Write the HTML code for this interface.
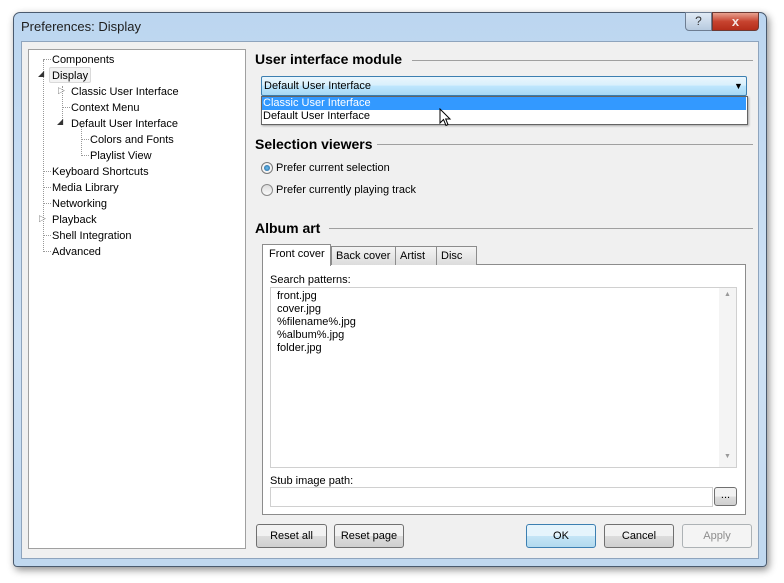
<!DOCTYPE html>
<html><head><style>
*{box-sizing:border-box;margin:0;padding:0}
body{width:784px;height:583px;background:#fff;font-family:"Liberation Sans",sans-serif;font-size:11px;color:#000;position:relative;overflow:hidden}
.a{position:absolute}
.frame{left:13px;top:12px;width:754px;height:555px;border:1px solid #4a5a6e;border-radius:7px 7px 4px 4px;background:linear-gradient(#bcd6f0,#cfe2f5 60%,#c0d8ef);box-shadow:2px 3px 8px rgba(0,0,0,.45)}
.client{left:21px;top:41px;width:738px;height:518px;background:#f0f0f0;border:1px solid #8ea4bd}
.tree{left:28px;top:49px;width:218px;height:500px;background:#fff;border:1px solid #a0a0a0}
.t{position:absolute;font-size:11px;white-space:nowrap}
.tr .t{margin-top:1px}
.h{position:absolute;font-size:14px;font-weight:bold;white-space:nowrap}
.ln{position:absolute;height:1px;background:#a0a0a0}
.btn{position:absolute;height:24px;border:1px solid #707070;border-radius:3px;background:linear-gradient(#f2f2f2 50%,#dddddd 51%,#cfcfcf);text-align:center;line-height:22px;font-size:11px}
.tab{position:absolute;top:246px;height:19px;border:1px solid #8c8c8c;border-bottom:none;background:linear-gradient(#f4f4f4,#dcdcdc);line-height:19px;padding-left:4px;font-size:11px}
.dot{position:absolute;border-left:1px dotted #999}
.doth{position:absolute;border-top:1px dotted #999;width:8px}
</style></head><body>
<div class="a frame"></div>
<div class="t" style="left:21px;top:19px;font-size:13px;color:#1e1e1e">Preferences: Display</div>
<div class="a" style="left:685px;top:12px;width:27px;height:19px;border:1px solid #6d7d92;border-radius:0 0 0 4px;background:linear-gradient(#e0ebf6,#b7cadf);text-align:center;font-size:12px;line-height:17px;color:#333">?</div>
<div class="a" style="left:712px;top:12px;width:47px;height:19px;border:1px solid #6d3a34;border-radius:0 0 4px 0;background:linear-gradient(#e8a18f,#c7432f 50%,#b42d1a);text-align:center;font-size:13px;line-height:17px;color:#f4e4e0;font-weight:bold">x</div>
<div class="a client"></div>
<div class="a tree"></div>
<div class="dot" style="left:43px;top:60px;height:192px"></div>
<div class="dot" style="left:62px;top:86px;height:38px"></div>
<div class="dot" style="left:81px;top:126px;height:30px"></div>
<div class="doth" style="left:43px;top:59px"></div>
<div class="doth" style="left:62px;top:107px"></div>
<div class="doth" style="left:81px;top:139px"></div>
<div class="doth" style="left:81px;top:155px"></div>
<div class="doth" style="left:43px;top:171px"></div>
<div class="doth" style="left:43px;top:187px"></div>
<div class="doth" style="left:43px;top:203px"></div>
<div class="doth" style="left:43px;top:235px"></div>
<div class="doth" style="left:43px;top:251px"></div>
<div class="a" style="left:49px;top:67px;width:42px;height:16px;background:#f3f3f3;border:1px solid #dadada;border-radius:2px"></div>
<div class="t" style="left:38px;top:69px;font-size:8px;color:#333">◢</div>
<div class="t" style="left:58px;top:85px;font-size:9px;color:#888">▷</div>
<div class="t" style="left:57px;top:117px;font-size:8px;color:#333">◢</div>
<div class="t" style="left:39px;top:213px;font-size:9px;color:#888">▷</div>
<div class="tr">
<div class="t" style="left:52px;top:53px">Components</div>
<div class="t" style="left:52px;top:69px">Display</div>
<div class="t" style="left:71px;top:85px">Classic User Interface</div>
<div class="t" style="left:71px;top:101px">Context Menu</div>
<div class="t" style="left:71px;top:117px">Default User Interface</div>
<div class="t" style="left:90px;top:133px">Colors and Fonts</div>
<div class="t" style="left:90px;top:149px">Playlist View</div>
<div class="t" style="left:52px;top:165px">Keyboard Shortcuts</div>
<div class="t" style="left:52px;top:181px">Media Library</div>
<div class="t" style="left:52px;top:197px">Networking</div>
<div class="t" style="left:52px;top:213px">Playback</div>
<div class="t" style="left:52px;top:229px">Shell Integration</div>
<div class="t" style="left:52px;top:245px">Advanced</div>
</div>

<div class="h" style="left:255px;top:51px">User interface module</div>
<div class="ln" style="left:412px;top:60px;width:341px"></div>
<div class="a" style="left:261px;top:76px;width:486px;height:20px;border:1px solid #3c7fb1;border-radius:2px;background:linear-gradient(#eaf6fd,#d9f0fc 45%,#bee6fd 50%,#a7d9f5)"></div>
<div class="t" style="left:264px;top:80px">Default User Interface</div>
<div class="t" style="left:734px;top:81px;font-size:9px">▼</div>
<div class="a" style="left:261px;top:96px;width:487px;height:29px;background:#fff;border:1px solid #646464;box-shadow:1px 1px 2px rgba(0,0,0,.3)"></div>
<div class="a" style="left:262px;top:97px;width:484px;height:13px;background:#3399ff"></div>
<div class="t" style="left:263px;top:97px;color:#fff">Classic User Interface</div>
<div class="t" style="left:263px;top:110px">Default User Interface</div>
<svg class="a" style="left:439px;top:108px" width="14" height="20"><path d="M1 1 L1 15 L4.5 11.5 L7 17.5 L9 16.5 L6.7 11 L11 11 Z" fill="#fff" stroke="#000" stroke-width="1"/></svg>

<div class="h" style="left:255px;top:136px">Selection viewers</div>
<div class="ln" style="left:377px;top:144px;width:376px"></div>
<div class="a" style="left:261px;top:162px;width:12px;height:12px;border:1px solid #7a7a7a;border-radius:50%;background:#f4f4f4"><div class="a" style="left:2px;top:2px;width:6px;height:6px;border-radius:50%;background:radial-gradient(#6cc1f0,#1b5a95)"></div></div>
<div class="t" style="left:276px;top:162px">Prefer current selection</div>
<div class="a" style="left:261px;top:184px;width:12px;height:12px;border:1px solid #8a8a8a;border-radius:50%;background:linear-gradient(#ddd,#fafafa)"></div>
<div class="t" style="left:276px;top:184px">Prefer currently playing track</div>

<div class="h" style="left:255px;top:220px">Album art</div>
<div class="ln" style="left:329px;top:228px;width:424px"></div>
<div class="a" style="left:262px;top:264px;width:484px;height:251px;background:#fff;border:1px solid #8c8c8c"></div>
<div class="tab" style="left:331px;width:65px">Back cover</div>
<div class="tab" style="left:395px;width:42px">Artist</div>
<div class="tab" style="left:436px;width:41px">Disc</div>
<div class="a" style="left:262px;top:244px;width:69px;height:22px;border:1px solid #8c8c8c;border-bottom:none;background:#fff;padding:3px 0 0 6px;font-size:11px">Front cover</div>
<div class="t" style="left:270px;top:274px">Search patterns:</div>
<div class="a" style="left:270px;top:287px;width:467px;height:181px;border:1px solid #d0d0d0;background:#fff"></div>
<div class="a" style="left:719px;top:288px;width:17px;height:179px;background:#f4f4f4"></div>
<div class="t" style="left:724px;top:291px;font-size:7px;color:#999">▲</div>
<div class="t" style="left:724px;top:453px;font-size:7px;color:#999">▼</div>
<div class="t" style="left:277px;top:290px;line-height:13px">front.jpg<br>cover.jpg<br>%filename%.jpg<br>%album%.jpg<br>folder.jpg</div>
<div class="t" style="left:270px;top:475px">Stub image path:</div>
<div class="a" style="left:270px;top:487px;width:443px;height:20px;border:1px solid #d0d0d0;background:#fff"></div>
<div class="btn" style="left:714px;top:487px;width:23px;height:19px;line-height:14px">...</div>

<div class="btn" style="left:256px;top:524px;width:71px">Reset all</div>
<div class="btn" style="left:334px;top:524px;width:70px">Reset page</div>
<div class="btn" style="left:526px;top:524px;width:70px;border-color:#3c7fb1;background:linear-gradient(#e5f4fc 50%,#c4e5f6 51%,#b2d9ee)">OK</div>
<div class="btn" style="left:604px;top:524px;width:70px">Cancel</div>
<div class="btn" style="left:682px;top:524px;width:70px;border-color:#adb2b5;background:#f4f4f4;color:#8d8d8d">Apply</div>
</body></html>
